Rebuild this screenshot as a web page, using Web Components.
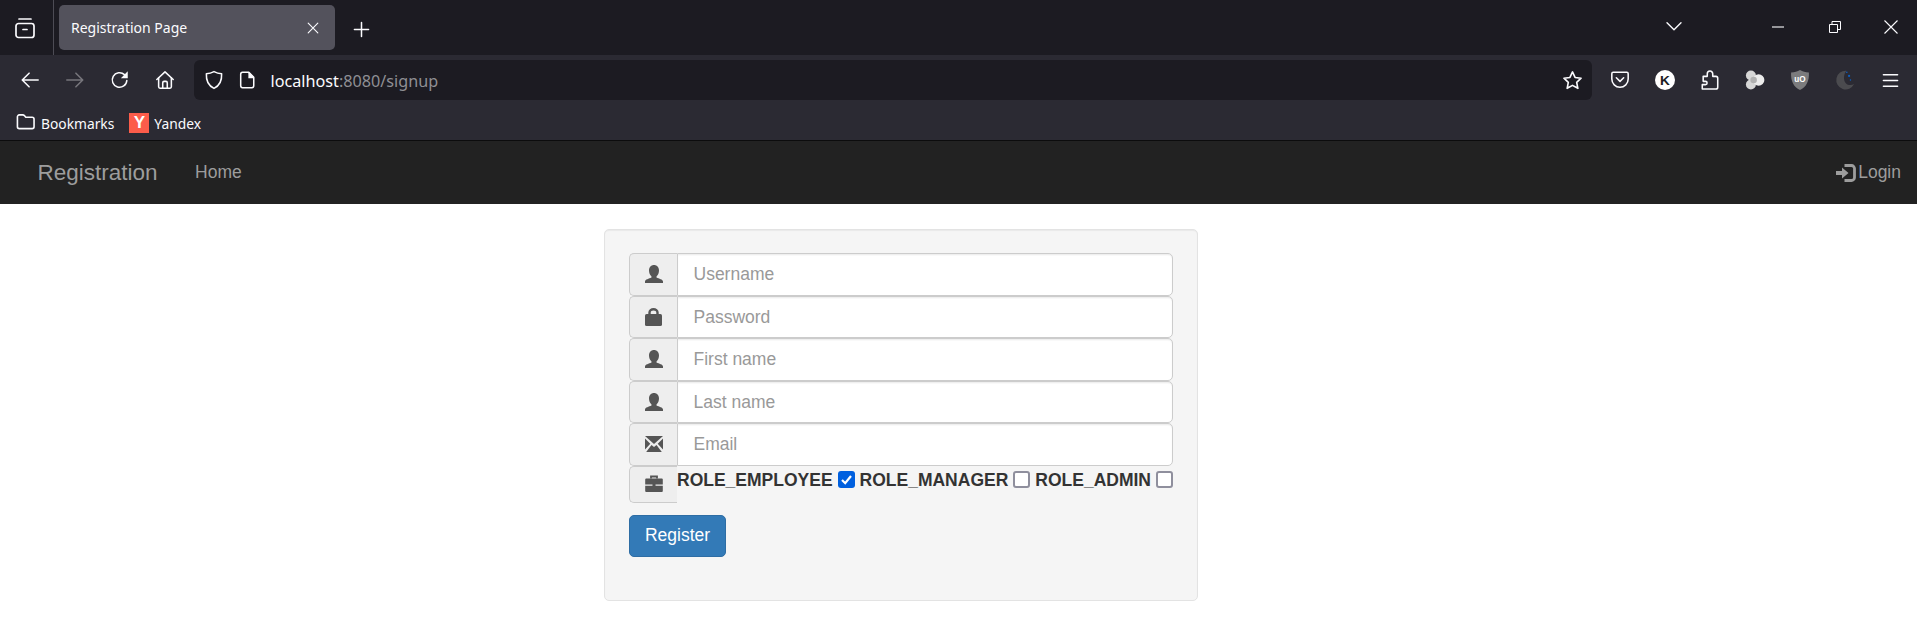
<!DOCTYPE html>
<html lang="en"><head><meta charset="utf-8"><title>Registration Page</title>
<style>
html,body{margin:0;padding:0;background:#fff;height:100%}
body{font-family:"Liberation Sans",Arial,sans-serif;overflow:hidden}
</style></head>
<body>
<browser-chrome></browser-chrome>
<app-navbar></app-navbar>
<signup-page></signup-page>
<script>
const S='fill="none" stroke="currentColor" stroke-width="1.7" stroke-linecap="round" stroke-linejoin="round"';
const ICONS={
 view:[24,`<g ${S}><path d="M6 3h12"/><rect x="3" y="7.500" width="18" height="14" rx="2.500"/><path d="M10 13.500h4"/></g>`],
 close:[16,`<path d="M2.500 2.500l11 11M13.500 2.500l-11 11" fill="none" stroke="currentColor" stroke-width="1.300" stroke-linecap="round"/>`],
 plus:[18,`<path d="M9 1.500v15M1.500 9h15" fill="none" stroke="currentColor" stroke-width="1.600" stroke-linecap="round"/>`],
 back:[22,`<g ${S}><path d="M20 11H3M10 3.500L2.500 11l7.500 7.500"/></g>`],
 forward:[22,`<g ${S}><path d="M2 11h17M12 3.500l7.500 7.500-7.500 7.500"/></g>`],
 reload:[22,`<g ${S}><path d="M18.500 11.500a8 8 0 1 1-2.600-6.400"/></g><path d="M19.500 1.500v7.500h-7.500z" fill="currentColor"/>`],
 home:[22,`<g ${S}><path d="M2 10.500L11 2l9 8.500"/><path d="M4 8.500v10a1.500 1.500 0 0 0 1.500 1.500h11a1.500 1.500 0 0 0 1.500-1.500v-10"/><path d="M8.500 20v-6a1.500 1.500 0 0 1 1.500-1.500h2a1.500 1.500 0 0 1 1.500 1.500v6"/></g>`],
 shield:[22,`<path ${S} d="M11 1.800c2.600 1.400 5.400 2.200 8.400 2.400.4 7.800-2.200 13.200-8.400 16-6.200-2.800-8.800-8.200-8.400-16 3-.2 5.800-1 8.400-2.400z"/>`],
 page:[20,`<path ${S} d="M5 1.500h7l5.500 5.500v9.500a2 2 0 0 1-2 2H5a2 2 0 0 1-2-2v-13a2 2 0 0 1 2-2z"/><path d="M11.500 1.500h1l5 5v1.500h-6z" fill="currentColor"/>`],
 star:[22,`<path ${S} d="M11 2l2.700 5.800 6.300.8-4.600 4.300 1.200 6.300L11 16.100l-5.600 3.100 1.200-6.300L2 8.600l6.300-.8z"/>`],
 pocket:[22,`<g ${S}><path d="M3.500 2.500h15a1.500 1.500 0 0 1 1.500 1.500v6a9 9 0 0 1-18 0V4a1.500 1.500 0 0 1 1.500-1.500z"/><path d="M7 8.500l4 4 4-4"/></g>`],
 k:[22,`<circle cx="11" cy="11" r="11" fill="#fff"/><text x="11" y="16.500" text-anchor="middle" font-family="Liberation Sans" font-weight="700" font-size="15" fill="#1c1b22">K</text>`],
 puzzle:[22,`<path ${S} d="M2.500 21h15a2 2 0 0 0 2-2V9a2 2 0 0 0-2-2h-3.500V4.200a3 3 0 0 0-6 0V7H3.500v5.500h2.500a1.800 1.800 0 0 1 0 3.600H2.500z"/>`],
 blobs:[22,`<circle cx="6.500" cy="6" r="5.500" fill="#d6d6d6"/><circle cx="6.500" cy="16" r="5.500" fill="#d6d6d6"/><circle cx="15" cy="11" r="6.300" fill="#ececec"/><circle cx="9.500" cy="11" r="3.600" fill="#b0b0b0"/>`],
 uo:[22,`<path d="M11 0c2.800 1.700 6 2.500 9.800 2.700.5 9.300-2.800 16-9.800 19.300-7-3.300-10.300-10-9.800-19.300C5 2.500 8.200 1.700 11 0z" fill="#7b7b7d"/><text x="11" y="13" text-anchor="middle" font-family="Liberation Sans" font-weight="700" font-size="9" fill="#fff">uO</text>`],
 moon:[22,`<path d="M12.500 .8A10.300 10.300 0 1 0 21 15.500c-3 1.800-7 1.500-9.300-1.300-2.700-3.300-2.300-9.300.8-13.400z" fill="#4b4b4f"/><circle cx="13" cy="2.500" r=".9" fill="#0a5fc4"/><circle cx="15.500" cy="6.500" r="1.200" fill="#0a5fc4"/><circle cx="17" cy="11" r=".8" fill="#0a5fc4"/>`],
 menu:[18,`<path d="M1.500 3h15M1.500 9h15M1.500 15h15" fill="none" stroke="currentColor" stroke-width="1.600" stroke-linecap="round"/>`],
 chev:[16,`<path d="M1 3.800l7 7 7-7" fill="none" stroke="currentColor" stroke-width="1.400" stroke-linecap="round" stroke-linejoin="round"/>`],
 min:[12,`<path d="M0 6h12" stroke="currentColor" stroke-width="1.100" fill="none"/>`],
 restore:[12,`<path d="M.5 3.500h8v8h-8zM3 3.500V.5h8.500v8h-3" fill="none" stroke="currentColor" stroke-width="1"/>`],
 winx:[14,`<path d="M.5 .5l13 13M13.500 .5l-13 13" fill="none" stroke="currentColor" stroke-width="1.100"/>`],
 folder:[20,`<path ${S} d="M1.500 4a2 2 0 0 1 2-2h3.500c1 0 1.500.4 2 1l1.300 1.500h6.700a2 2 0 0 1 2 2v8a2 2 0 0 1-2 2h-13.500a2 2 0 0 1-2-2z"/>`],
 user:[18,`<path d="M9 0C11.800 0 14 2.200 14 5.500 14 8 13 10 11.500 11.500V12.500C14 13.500 18 14.500 18 16.500V18H0V16.500C0 14.500 4 13.500 6.500 12.500V11.500C5 10 4 8 4 5.500 4 2.200 6.200 0 9 0Z" fill="currentColor"/>`],
 lock:[18,`<rect x="0" y="6" width="17" height="12" rx="1.600" fill="currentColor"/><path d="M4.500 7V4.400a4 3.200 0 0 1 8 0V7" fill="none" stroke="currentColor" stroke-width="2.400"/>`],
 mail:[18,`<path d="M0 1h18L9 9zM0 3.500V14.500l5.300-5.800zM18 3.500V14.500l-5.300-5.800zM1.200 17h15.600l-5.300-7L9 12 6.500 10z" fill="currentColor"/>`],
 brief:[18,`<path d="M6 3.500V1.500h6v2" fill="none" stroke="currentColor" stroke-width="1.800"/><path d="M.2 4.500A1 1 0 0 1 1.200 3.500h15.600a1 1 0 0 1 1 1V9.500H.2z" fill="currentColor"/><path d="M.2 10.700h17.600v5.300a1 1 0 0 1-1 1H1.200a1 1 0 0 1-1-1z" fill="currentColor"/><rect x="7.500" y="9" width="3" height="2.200" fill="currentColor"/>`],
 login:[20,`<path d="M0 8h6V4.500L12.500 10 6 15.500V12H0z" fill="currentColor"/><path d="M8.500 2.500h7a3 3 0 0 1 3 3v9a3 3 0 0 1-3 3h-7" fill="none" stroke="currentColor" stroke-width="2.800"/>`]
};
class UiIcon extends HTMLElement{
 connectedCallback(){
  const [vb,body]=ICONS[this.getAttribute('name')];
  const sz=this.getAttribute('size')||vb;
  this.attachShadow({mode:'open'}).innerHTML=`<style>:host{display:inline-flex;align-items:center;justify-content:center;flex:none;line-height:0}svg{display:block;overflow:visible}</style><svg width="${sz}" height="${sz}" viewBox="0 0 ${vb} ${vb}">${body}</svg>`;
 }
}
customElements.define('ui-icon',UiIcon);

class BrowserTab extends HTMLElement{
 connectedCallback(){
  this.attachShadow({mode:'open'}).innerHTML=`<style>
  :host{display:flex;align-items:center;box-sizing:border-box;width:276px;height:45px;margin-top:5px;padding:0 15px 0 12px;background:#53525c;border-radius:5px;color:#fbfbfe;font:14px/20px "Noto Sans",sans-serif}
  span{flex:1;white-space:nowrap;padding-top:1px}
  </style><span><slot></slot></span><ui-icon name="close" size="14"></ui-icon>`;
 }
}
customElements.define('browser-tab',BrowserTab);

class ToolBtn extends HTMLElement{
 connectedCallback(){
  const c=this.getAttribute('color')||'#fbfbfe';
  this.attachShadow({mode:'open'}).innerHTML=`<style>:host{display:flex;align-items:center;justify-content:center;width:45px;height:40px;flex:none;color:${c}}</style><ui-icon name="${this.getAttribute('name')}" size="${this.getAttribute('size')||20}"></ui-icon>`;
 }
}
customElements.define('tool-btn',ToolBtn);

class BrowserChrome extends HTMLElement{
 connectedCallback(){
  this.attachShadow({mode:'open'}).innerHTML=`<style>
  :host{display:block;color:#fbfbfe;font-family:"Noto Sans",sans-serif}
  .tabs{display:flex;height:55px;background:#1c1b22;box-sizing:border-box}
  .view{width:53px;display:flex;justify-content:center;align-items:center;padding-right:3px;box-sizing:border-box;height:55px}
  .sep{width:1px;height:55px;background:#4d4c55;margin-right:5px}
  .new{width:52px;display:flex;align-items:center;justify-content:center;padding-top:3px;box-sizing:border-box}
  .spring{flex:1}
  .win{display:flex;align-items:center;justify-content:center;width:56px;height:54px}
  .chev{margin-right:49px}
  .rest{width:60px}
  .mini{width:54px}
  .last{width:52px}
  .tools{display:flex;align-items:center;height:50px;background:#2b2a33;padding:5px 4.500px 5px 7.500px;box-sizing:border-box}
  .url{flex:1;display:flex;align-items:center;height:40px;margin:0 6px 0 6px;background:#1c1b22;border-radius:6px;padding:0 9px 0 10px;font-size:16.200px;min-width:0}
  .url .a{margin-right:14px}
  .url .p{margin-right:15px}
  .url .t{flex:1;white-space:nowrap;padding-top:2px}
  .url .dim{color:#8f8f94;padding-top:0}
  .marks{display:flex;align-items:center;height:35px;background:#2b2a33;padding:0 0 0 16px;box-sizing:border-box;font-size:13.800px}
  .marks span{padding-top:1px}
  .marks .f{margin-right:6px}
  .marks .ya{display:flex;align-items:center;justify-content:center;width:20px;height:20px;padding:0;margin:0 5px 0 15px;background:#fc5c4a;color:#fff;font:700 17px/20px "Liberation Sans",sans-serif}
  .line{height:1px;background:#0c0c0d}
  </style>
  <div class="tabs">
   <div class="view"><ui-icon name="view" size="24"></ui-icon></div>
   <div class="sep"></div>
   <browser-tab>Registration Page</browser-tab>
   <div class="new"><ui-icon name="plus" size="17"></ui-icon></div>
   <div class="spring"></div>
   <div class="win chev"><ui-icon name="chev" size="16"></ui-icon></div>
   <div class="win mini"><ui-icon name="min" size="12"></ui-icon></div>
   <div class="win rest"><ui-icon name="restore" size="12"></ui-icon></div>
   <div class="win last"><ui-icon name="winx" size="14"></ui-icon></div>
  </div>
  <div class="tools">
   <tool-btn name="back"></tool-btn>
   <tool-btn name="forward" color="#77767c"></tool-btn>
   <tool-btn name="reload"></tool-btn>
   <tool-btn name="home"></tool-btn>
   <div class="url">
    <ui-icon class="a" name="shield" size="20"></ui-icon>
    <ui-icon class="p" name="page" size="18"></ui-icon>
    <span class="t">localhost<span class="dim">:8080/signup</span></span>
    <ui-icon name="star" size="21"></ui-icon>
   </div>
   <tool-btn name="pocket"></tool-btn>
   <tool-btn name="k"></tool-btn>
   <tool-btn name="puzzle"></tool-btn>
   <tool-btn name="blobs"></tool-btn>
   <tool-btn name="uo"></tool-btn>
   <tool-btn name="moon"></tool-btn>
   <tool-btn name="menu" size="17"></tool-btn>
  </div>
  <div class="marks">
   <ui-icon class="f" name="folder" size="19"></ui-icon><span>Bookmarks</span>
   <span class="ya">Y</span><span>Yandex</span>
  </div>
  <div class="line"></div>`;
 }
}
customElements.define('browser-chrome',BrowserChrome);

class AppNavbar extends HTMLElement{
 connectedCallback(){
  this.attachShadow({mode:'open'}).innerHTML=`<style>
  :host{display:flex;align-items:center;height:63px;background:#222;color:#9d9d9d;padding:0 16px 0 37.500px;font:17.500px/25px "Liberation Sans",sans-serif}
  .brand{font-size:22.500px;margin-right:37.500px}
  .spring{flex:1}
  .login{display:flex;align-items:center;gap:2px}
  </style>
  <span class="brand">Registration</span><span>Home</span><span class="spring"></span>
  <span class="login"><ui-icon name="login" size="20"></ui-icon><span>Login</span></span>`;
 }
}
customElements.define('app-navbar',AppNavbar);

class InputRow extends HTMLElement{
 connectedCallback(){
  const ph=this.getAttribute('placeholder');
  this.attachShadow({mode:'open'}).innerHTML=`<style>
  :host{display:flex;height:42.500px;box-sizing:border-box}
  .addon{display:flex;align-items:center;justify-content:center;box-sizing:border-box;width:48px;flex:none;background:#eee;border:1.250px solid #ccc;border-right:0;border-radius:5px 0 0 5px;color:#555}
  input{flex:1;min-width:0;box-sizing:border-box;height:100%;margin:0;padding:1px 15.500px 0;background:#fff;border:1.250px solid #ccc;border-radius:0 5px 5px 0;box-shadow:inset 0 1.250px 1.250px rgba(0,0,0,.075);font:17.500px "Liberation Sans",sans-serif;color:#555;outline:0}
  input::placeholder{color:#999;opacity:1}
  </style>
  <span class="addon"><ui-icon name="${this.getAttribute('icon')}" size="18"></ui-icon></span>
  <input type="${this.getAttribute('type')||'text'}" placeholder="${ph}" aria-label="${ph}">`;
 }
}
customElements.define('input-row',InputRow);

class RoleCheck extends HTMLElement{
 connectedCallback(){
  const on=this.hasAttribute('checked');
  this.attachShadow({mode:'open'}).innerHTML=`<style>
  :host{display:inline-flex;align-items:center;gap:5px;font:700 17.500px/25px "Liberation Sans",sans-serif;color:#333;white-space:nowrap}
  .lbl{transform:translateY(1px)}
  .box{box-sizing:border-box;display:flex;align-items:center;justify-content:center;width:17px;height:17px;border-radius:3px;background:${on?'#0060df':'#fff'};border:${on?'0':'2px solid #8f8f9d'}}
  </style><span class="lbl"><slot></slot></span><span class="box">${on?'<svg width="13" height="13" viewBox="0 0 13 13"><path d="M2 7l3.200 3.200L11 3" fill="none" stroke="#fff" stroke-width="2.200"/></svg>':''}</span>`;
 }
}
customElements.define('role-check',RoleCheck);

class SignupPage extends HTMLElement{
 connectedCallback(){
  this.attachShadow({mode:'open'}).innerHTML=`<style>
  :host{display:grid;grid-template-columns:604px 594px 1fr;padding-top:25px}
  .well{grid-column:2;box-sizing:border-box;height:372px;padding:23px 24px;background:#f5f5f5;border:1.250px solid #e3e3e3;border-radius:5px;box-shadow:inset 0 1px 1px rgba(0,0,0,.05)}
  .roles{display:flex;height:37px}
  .roles .addon{display:flex;align-items:center;justify-content:center;box-sizing:border-box;width:48px;flex:none;background:#eee;border:1.250px solid #ccc;border-right:0;border-radius:5px 0 0 5px;color:#555}
  .checks{flex:1;display:flex;justify-content:space-between;align-items:flex-start;height:25px;margin-top:1px}
  button{display:block;box-sizing:border-box;width:97px;height:42.500px;margin-top:12px;padding:0;background:#337ab7;border:1.250px solid #2e6da4;border-radius:5px;color:#fff;font:17.500px "Liberation Sans",sans-serif}
  </style>
  <div class="well">
   <input-row icon="user" placeholder="Username"></input-row>
   <input-row icon="lock" type="password" placeholder="Password"></input-row>
   <input-row icon="user" placeholder="First name"></input-row>
   <input-row icon="user" placeholder="Last name"></input-row>
   <input-row icon="mail" placeholder="Email"></input-row>
   <div class="roles">
    <span class="addon"><ui-icon name="brief" size="18"></ui-icon></span>
    <div class="checks">
     <role-check checked>ROLE_EMPLOYEE</role-check>
     <role-check>ROLE_MANAGER</role-check>
     <role-check>ROLE_ADMIN</role-check>
    </div>
   </div>
   <button type="button">Register</button>
  </div>`;
 }
}
customElements.define('signup-page',SignupPage);
</script>
</body></html>
